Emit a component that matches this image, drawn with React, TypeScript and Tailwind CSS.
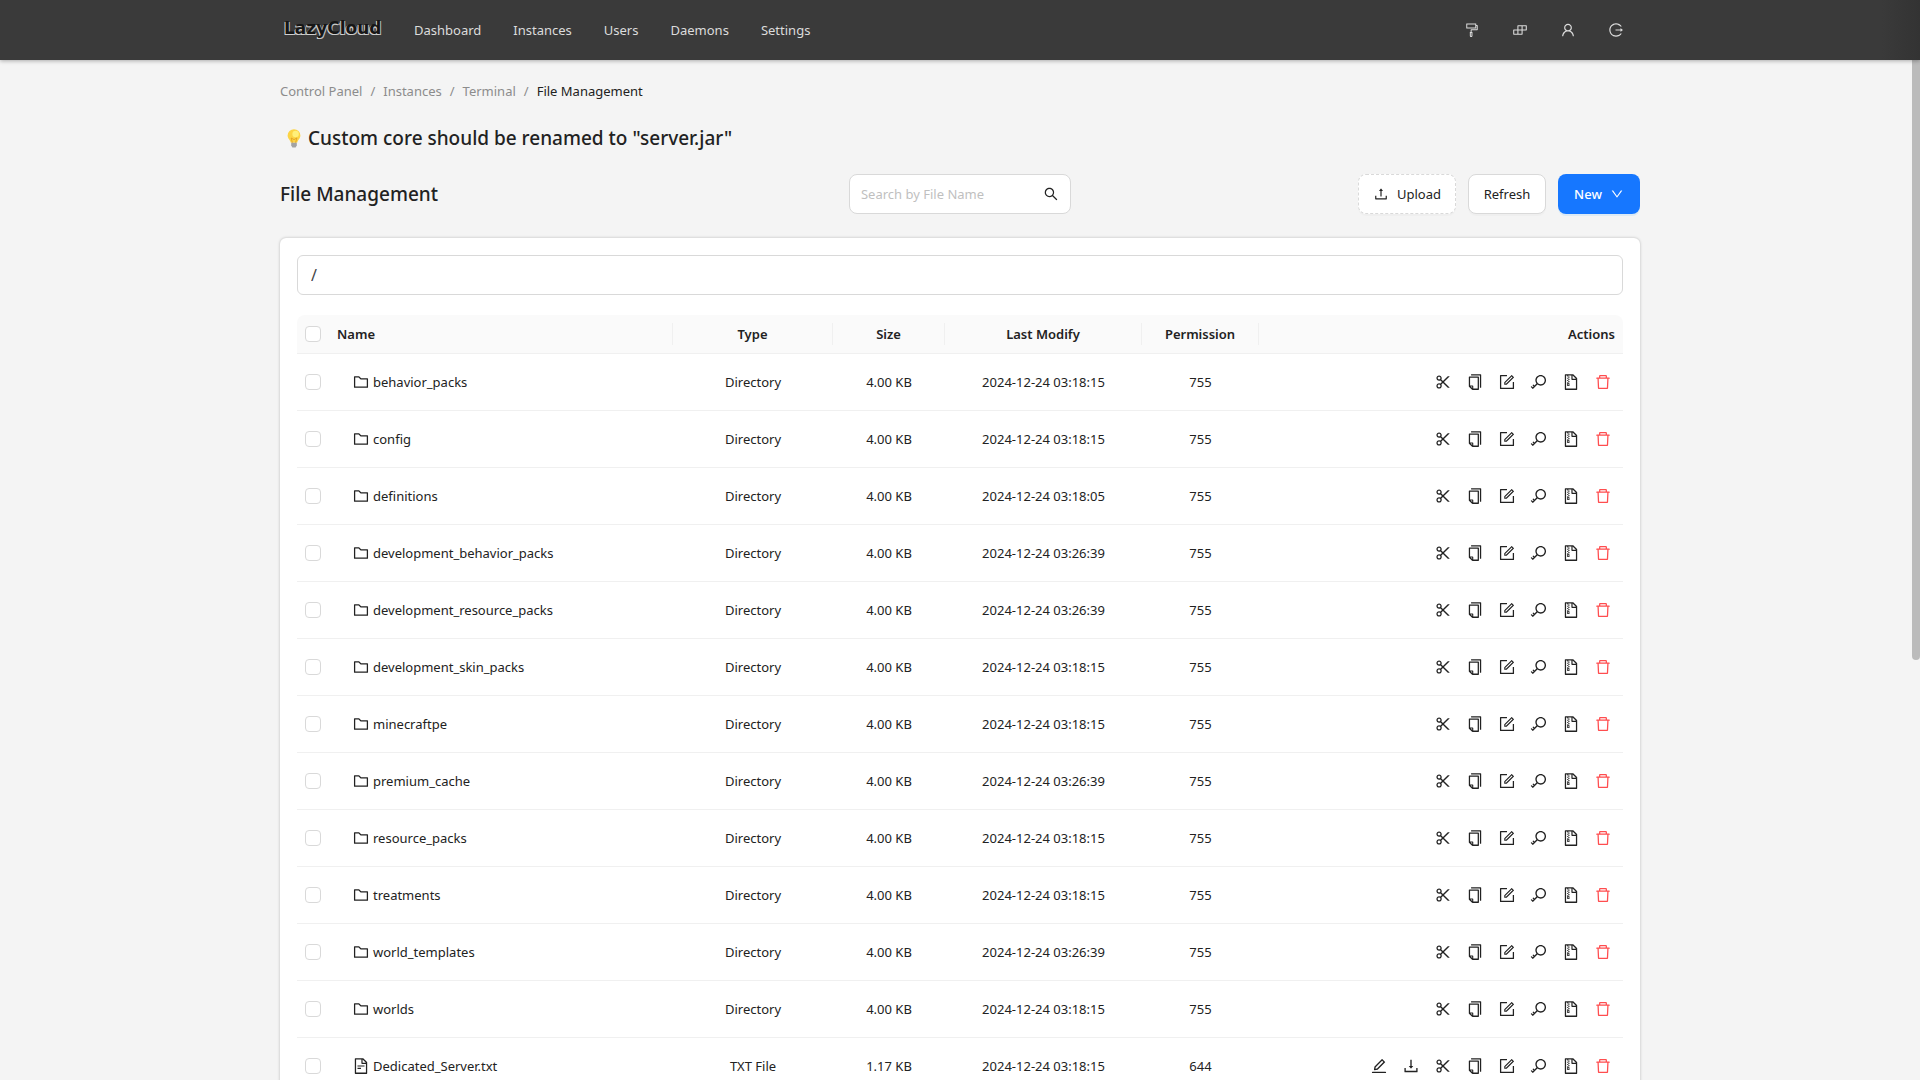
import React from "react";
import {
  AiOutlineBuild,
  AiOutlineCopy,
  AiOutlineDelete,
  AiOutlineDown,
  AiOutlineDownload,
  AiOutlineEdit,
  AiOutlineFileText,
  AiOutlineFileZip,
  AiOutlineFolder,
  AiOutlineForm,
  AiOutlineFormatPainter,
  AiOutlineKey,
  AiOutlineLogout,
  AiOutlineScissor,
  AiOutlineSearch,
  AiOutlineUpload,
  AiOutlineUser,
} from "react-icons/ai";

type FileRow = {
  name: string;
  type: string;
  size: string;
  modified: string;
  permission: string;
  isFile?: boolean;
};

const dir = (name: string, modified: string): FileRow => ({
  name,
  type: "Directory",
  size: "4.00 KB",
  modified,
  permission: "755",
});

const files: FileRow[] = [
  dir("behavior_packs", "2024-12-24 03:18:15"),
  dir("config", "2024-12-24 03:18:15"),
  dir("definitions", "2024-12-24 03:18:05"),
  dir("development_behavior_packs", "2024-12-24 03:26:39"),
  dir("development_resource_packs", "2024-12-24 03:26:39"),
  dir("development_skin_packs", "2024-12-24 03:18:15"),
  dir("minecraftpe", "2024-12-24 03:18:15"),
  dir("premium_cache", "2024-12-24 03:26:39"),
  dir("resource_packs", "2024-12-24 03:18:15"),
  dir("treatments", "2024-12-24 03:18:15"),
  dir("world_templates", "2024-12-24 03:26:39"),
  dir("worlds", "2024-12-24 03:18:15"),
  {
    name: "Dedicated_Server.txt",
    type: "TXT File",
    size: "1.17 KB",
    modified: "2024-12-24 03:18:15",
    permission: "644",
    isFile: true,
  },
];

const navItems = ["Dashboard", "Instances", "Users", "Daemons", "Settings"];

const toolItems = [
  { label: "Theme", Icon: AiOutlineFormatPainter },
  { label: "Layout", Icon: AiOutlineBuild },
  { label: "Profile", Icon: AiOutlineUser },
  { label: "Log out", Icon: AiOutlineLogout },
];

const fileActions = [
  { label: "Edit", Icon: AiOutlineEdit },
  { label: "Download", Icon: AiOutlineDownload },
];

const commonActions = [
  { label: "Cut", Icon: AiOutlineScissor },
  { label: "Copy", Icon: AiOutlineCopy },
  { label: "Rename", Icon: AiOutlineForm },
  { label: "Change permission", Icon: AiOutlineKey },
  { label: "Compress", Icon: AiOutlineFileZip },
];

function Header() {
  return (
    <header className="relative z-10 h-15 shrink-0 bg-[#3a3a3a] bg-linear-to-r from-[#3a3a3a] from-98% to-[#333] shadow-[0_1px_4px_rgba(0,0,0,0.3)]">
      <div className="mx-auto flex h-full max-w-[1360px] items-center">
        <a
          href="#"
          className="flex w-[118px] pb-1 pl-1 font-['DejaVu_Sans'] text-[17px] leading-5 font-bold text-[#161616] [text-shadow:-1px_1px_0_#d0d0d0,1px_1px_0_#bbb]"
        >
          LazyCloud
        </a>
        <nav className="flex flex-1 gap-8 pl-4">
          {navItems.map((item) => (
            <a key={item} href="#" className="text-[#dcdcdc]">
              {item}
            </a>
          ))}
        </nav>
        <div className="flex">
          {toolItems.map(({ label, Icon }) => (
            <button
              key={label}
              aria-label={label}
              className="flex size-12 items-center justify-center text-[#dcdcdc]"
            >
              <Icon className="size-4" />
            </button>
          ))}
        </div>
      </div>
    </header>
  );
}

function Breadcrumb() {
  return (
    <nav aria-label="Breadcrumb">
      <ol className="flex gap-2 text-[#8c8c8c]">
        {["Control Panel", "Instances", "Terminal"].map((item) => (
          <li key={item} className="flex gap-2">
            <a href="#">{item}</a>
            <span>/</span>
          </li>
        ))}
        <li className="text-[#222]">File Management</li>
      </ol>
    </nav>
  );
}

function Bulb() {
  return (
    <svg viewBox="0 0 20 24" className="h-5 w-4" aria-hidden="true">
      <path d="M10 1a8 8 0 0 0-8 8c0 4 3.4 5.6 4 9h8c.6-3.4 4-5 4-9a8 8 0 0 0-8-8Z" fill="#fcd445" />
      <circle cx="12" cy="7" r="4" fill="#fff07a" />
      <path d="M8 18l-1.500-6 3.500 2 3.500-2L12 18" fill="none" stroke="#e09a20" strokeWidth="1" />
      <path d="M6.500 18h7v3.500L12 24H8l-1.500-2.500Z" fill="#a3a3a3" />
    </svg>
  );
}

function Toolbar() {
  return (
    <div className="mt-5 grid grid-cols-3 items-center">
      <h1 className="text-[19px] leading-10 font-medium">File Management</h1>
      <label className="flex h-10 w-[222px] items-center justify-self-center rounded-lg border border-[#d9d9d9] bg-white px-[11px]">
        <input
          type="text"
          aria-label="Search by File Name"
          placeholder="Search by File Name"
          className="min-w-0 flex-1 outline-none placeholder:text-[#bfbfbf]"
        />
        <AiOutlineSearch className="size-4" />
      </label>
      <div className="flex gap-3 justify-self-end">
        <button className="flex h-10 w-[98px] items-center justify-center gap-2 rounded-lg border border-dashed border-[#d9d9d9] bg-white shadow-[0_2px_0_rgba(0,0,0,0.02)]">
          <AiOutlineUpload className="size-4" />
          Upload
        </button>
        <button className="h-10 w-[78px] rounded-lg border border-[#d9d9d9] bg-white shadow-[0_2px_0_rgba(0,0,0,0.02)]">
          Refresh
        </button>
        <button className="flex h-10 w-[82px] items-center justify-center gap-2 rounded-lg bg-[#1677ff] font-medium text-white shadow-[0_2px_0_rgba(5,145,255,0.1)]">
          New
          <AiOutlineDown className="size-3.5" />
        </button>
      </div>
    </div>
  );
}

function Check({ label }: { label: string }) {
  return (
    <input
      type="checkbox"
      aria-label={label}
      className="block size-4 appearance-none rounded-sm border border-[#d9d9d9] bg-white"
    />
  );
}

function HeadCell({ children }: { children: React.ReactNode }) {
  return (
    <th className="p-0 font-semibold">
      <div className="border-r border-[#f0f0f0]">{children}</div>
    </th>
  );
}

function FileTable() {
  return (
    <table className="mt-5 w-full table-fixed border-separate border-spacing-0">
      <colgroup>
        <col className="w-8" />
        <col className="w-[344px]" />
        <col className="w-40" />
        <col className="w-28" />
        <col className="w-[197px]" />
        <col className="w-[117px]" />
        <col />
      </colgroup>
      <thead>
        <tr className="h-[39px] bg-[#fafafa] *:border-b *:border-[#f0f0f0]">
          <th className="rounded-tl-lg pl-2">
            <Check label="Select all files" />
          </th>
          <th className="p-0 text-left font-semibold">
            <div className="border-r border-[#f0f0f0] pl-2">Name</div>
          </th>
          <HeadCell>Type</HeadCell>
          <HeadCell>Size</HeadCell>
          <HeadCell>Last Modify</HeadCell>
          <HeadCell>Permission</HeadCell>
          <th className="rounded-tr-lg pr-2 text-right font-semibold">Actions</th>
        </tr>
      </thead>
      <tbody>
        {files.map((file) => (
          <tr key={file.name} className="h-[57px] text-center *:border-b *:border-[#f0f0f0]">
            <td className="pl-2">
              <Check label={`Select ${file.name}`} />
            </td>
            <td className="pl-[23px]">
              <button className="flex items-center gap-[3px]">
                {file.isFile ? (
                  <AiOutlineFileText className="size-[18px]" />
                ) : (
                  <AiOutlineFolder className="size-[18px]" />
                )}
                {file.name}
              </button>
            </td>
            <td>{file.type}</td>
            <td>{file.size}</td>
            <td>{file.modified}</td>
            <td>{file.permission}</td>
            <td className="pr-1">
              <div className="flex justify-end">
                {(file.isFile ? [...fileActions, ...commonActions] : commonActions).map(
                  ({ label, Icon }) => (
                    <button
                      key={label}
                      aria-label={`${label} ${file.name}`}
                      className="flex size-8 items-center justify-center"
                    >
                      <Icon className="size-[18px]" />
                    </button>
                  ),
                )}
                <button
                  aria-label={`Delete ${file.name}`}
                  className="flex size-8 items-center justify-center text-[#ff4d4f]"
                >
                  <AiOutlineDelete className="size-[18px]" />
                </button>
              </div>
            </td>
          </tr>
        ))}
      </tbody>
    </table>
  );
}

export default function App() {
  return (
    <div className="relative flex h-screen flex-col overflow-hidden bg-[#f4f4f4] font-['Noto_Sans',sans-serif] text-[13px] leading-[22px] text-[#222]">
      <Header />
      <div className="min-h-0 flex-1 overflow-hidden">
        <main className="mx-auto max-w-[1360px] pt-5">
          <Breadcrumb />
          <h2 className="mt-5 flex items-center gap-1.5 pl-1.5 text-[19px] leading-8 font-medium">
            <Bulb />
            Custom core should be renamed to "server.jar"
          </h2>
          <Toolbar />
          <section className="mt-6 rounded-md bg-white px-[17px] pt-[17px] shadow-[0_0_3px_rgba(0,0,0,0.25)]">
            <input
              type="text"
              aria-label="Current path"
              defaultValue="/"
              className="block h-10 w-full rounded-md border border-[#d9d9d9] px-[13px] text-base text-[#444] outline-none"
            />
            <FileTable />
          </section>
        </main>
      </div>
      <div className="absolute top-15 right-0 h-150 w-2 rounded-b-full bg-[#bbb]" />
    </div>
  );
}
